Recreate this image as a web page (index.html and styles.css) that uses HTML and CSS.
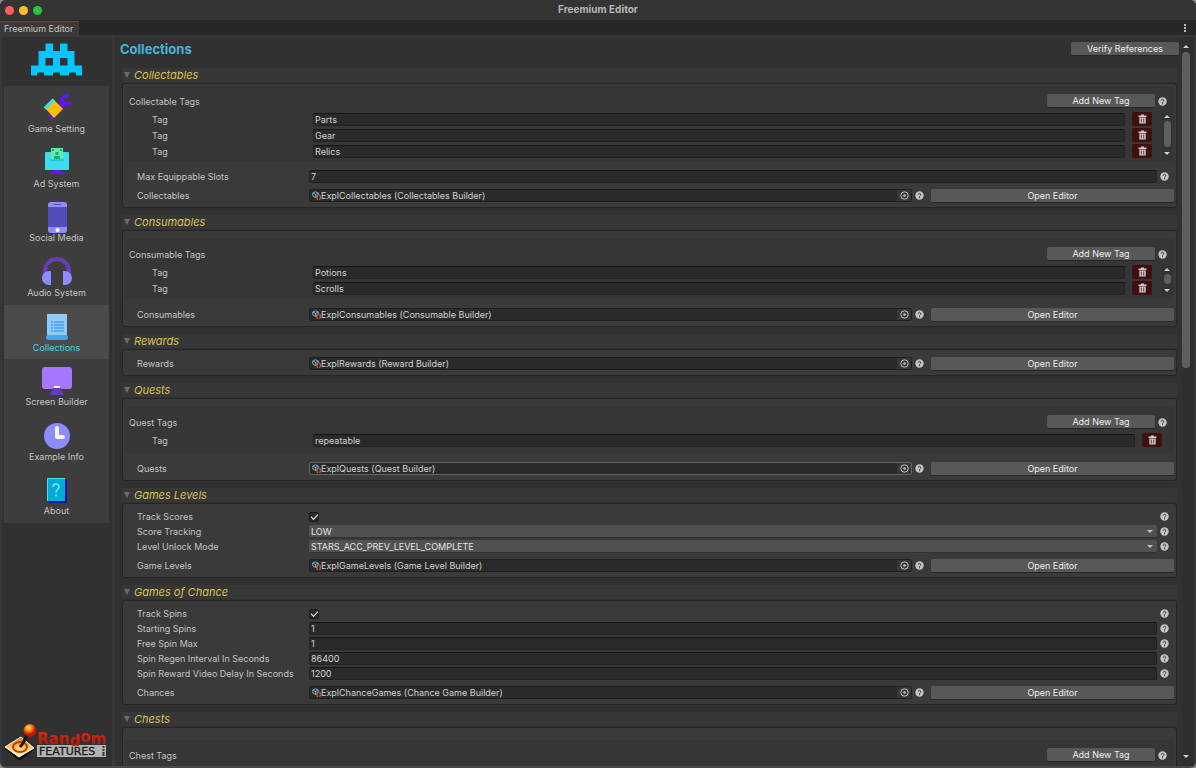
FILE: index.html
```html
<!DOCTYPE html>
<html lang="en">
<head>
    <meta charset="UTF-8">
    <meta name="viewport" content="width=device-width, initial-scale=1.0">
    <title>Freemium Editor</title>
    <link rel="stylesheet" href="styles.css">
</head>
<body>
    <!-- shared icons -->
    <svg class="icon-defs" width="0" height="0" aria-hidden="true">
        <symbol id="help" viewBox="0 0 9 9">
            <circle cx="4.5" cy="4.5" r="4.2" fill="#c4c4c4"/>
            <path d="M3.2 3.6a1.3 1.3 0 1 1 2 1.1q-.7.4-.7 1" fill="none" stroke="#333" stroke-width="1"/>
            <rect x="4" y="6.2" width="1" height="1" fill="#333"/>
        </symbol>
        <symbol id="trash" viewBox="0 0 9 10">
            <path d="M3 .5h3v1h2.500v1.500H.5V1.500H3z" fill="#ccc"/>
            <path d="M1.300 3.500h6.400V9.500H1.300z" fill="#ccc"/>
            <path d="M3.300 4.500v4M5.700 4.500v4" stroke="#4a1c1c" stroke-width=".8"/>
        </symbol>
        <symbol id="asset" viewBox="0 0 9 9">
            <path d="M3.500.8 6.200 2v2.500L3.500 6.500.8 5V2zM.8 2l2.700 1.400L6.200 2M3.500 3.400v3" fill="none" stroke="#6bc0de" stroke-width=".9"/>
            <path d="M6 4q-1 0-1 1v.9l-.6.5.6.5v.6q0 1 1 1M7.200 4q1 0 1 1v.9l.6.5-.6.5v.6q0 1-1 1" fill="none" stroke="#f0502a" stroke-width="1.200"/>
        </symbol>
        <symbol id="picker" viewBox="0 0 9 9">
            <circle cx="4.500" cy="4.500" r="3.700" fill="none" stroke="#c4c4c4"/>
            <circle cx="4.500" cy="4.500" r="1.300" fill="#c4c4c4"/>
        </symbol>
    </svg>

    <div class="window">
        <header class="titlebar">
            <div class="lights"><i class="red"></i><i class="yellow"></i><i class="green"></i></div>
            <h1>Freemium Editor</h1>
        </header>
        <div class="tabs">
            <div class="tab">Freemium Editor</div>
            <button class="kebab" aria-label="Menu"><i></i><i></i><i></i></button>
        </div>

        <div class="body">
            <aside class="sidebar">
                <svg class="logo" viewBox="0 0 51 32" fill="#00c8ff">
                    <path d="M14.500 0h7.500v7.500h7V0h7.500v7.500h7V22H51v10h-6v-3h-7v3h-9v-3h-7v3h-9v-3H6v3H0V22h7.500V7.500h7zM14.500 14.500V22H22v-7.500zM29 14.500V22h7.500v-7.500z" fill-rule="evenodd"/>
                </svg>
                <nav class="menu">
                    <a href="#game">
                        <svg viewBox="0 0 32 32">
                            <path d="M19 15l5-5" stroke="#6316f5" stroke-width="6"/>
                            <path d="M28 4.500a4.500 4.500 0 1 0 1.500 5" fill="none" stroke="#6316f5" stroke-width="3.500"/>
                            <path d="M7 23l4-2 3 4-3 3z" fill="#6316f5"/>
                            <path d="M4 16l8-9 10 10-9 9z" fill="#fdbf00"/>
                            <path d="M2.700 15.300l9-9L14 8.700l-9 9z" fill="#3ddcf0"/>
                        </svg>
                        Game Setting
                    </a>
                    <a href="#ads">
                        <svg viewBox="0 0 32 32">
                            <rect x="4" y="5" width="24" height="18" rx="1" fill="#3ddcf0"/>
                            <rect x="10" y="1" width="12" height="12" fill="#64e8b0"/>
                            <path d="M11 2h2v2h-2zM19 2h2v2h-2zM14.500 5h3v3h-3zM13 9h6v3h-6z" fill="#12b27a"/>
                            <path d="M9 13h14" stroke="#1ba9bb"/>
                            <path d="M13 23h6v2h5v2H9v-2h4z" fill="#6316f5"/>
                        </svg>
                        Ad System
                    </a>
                    <a href="#social">
                        <svg viewBox="0 0 32 32">
                            <rect x="7" y="1" width="19" height="31" rx="3" fill="#8c8cff"/>
                            <path d="M7 6h19v20H7z" fill="#504fb9"/>
                            <path d="M13 3.500h7" stroke="#504fb9"/>
                            <circle cx="16.500" cy="29" r="2" fill="#fff"/>
                        </svg>
                        Social Media
                    </a>
                    <a href="#audio">
                        <svg viewBox="0 0 32 32">
                            <path d="M4 18v-3a12 12 0 0 1 24 0v3" fill="none" stroke="#6a3cb4" stroke-width="4"/>
                            <path d="M10 15v14H8a7 7 0 0 1 0-14zM22 15v14h2a7 7 0 0 0 0-14z" fill="#8c8cff"/>
                        </svg>
                        Audio System
                    </a>
                    <a href="#collections" class="active">
                        <svg viewBox="0 0 32 32">
                            <path d="M6 3h20v24H6z" fill="#90caf9"/>
                            <path d="M10 11h2M10 14h2M10 17h2M10 20h2M13 11h10M13 14h10M13 17h10M13 20h10" stroke="#1e88e5"/>
                            <rect x="5" y="24" width="22" height="5" rx="2" fill="#42a5f5"/>
                        </svg>
                        Collections
                    </a>
                    <a href="#screens">
                        <svg viewBox="0 0 32 32">
                            <rect x="1" y="2" width="30" height="22" rx="3" fill="#a576ff"/>
                            <path d="M12 23h8l3 7H9z" fill="#6a3cb4"/>
                            <path d="M13 21h6v2h-6z" fill="#eef"/>
                        </svg>
                        Screen Builder
                    </a>
                    <a href="#example">
                        <svg viewBox="0 0 32 32">
                            <circle cx="16" cy="16" r="13" fill="#8c8cff"/>
                            <path d="M16 8v9h6" fill="none" stroke="#f4f4ff" stroke-width="4" stroke-linecap="round" stroke-linejoin="round"/>
                        </svg>
                        Example Info
                    </a>
                    <a href="#about">
                        <svg viewBox="0 0 32 32">
                            <path d="M8 6h18v23H8z" fill="#1a0dab"/>
                            <path d="M6 4h18v23H6z" fill="#00acd6"/>
                            <path d="M6.500 27V4.500H24" fill="none" stroke="#4ddcf0"/>
                            <path d="M12 13q0-3 3-3t3 3q0 1.500-1.500 2.500T15 18.500M15 20.500v2" fill="none" stroke="#7aeaff" stroke-width="1.500"/>
                        </svg>
                        About
                    </a>
                </nav>
                <svg class="brand" viewBox="0 0 104 38">
                    <defs>
                        <radialGradient id="ball" cx=".4" cy=".3"><stop offset="0" stop-color="#ffe9a0"/><stop offset=".4" stop-color="#ff9a1e"/><stop offset="1" stop-color="#c01800"/></radialGradient>
                        <linearGradient id="base" x2="0" y2="1"><stop offset="0" stop-color="#e86c10"/><stop offset=".6" stop-color="#ffd76a"/><stop offset="1" stop-color="#fff3c8"/></linearGradient>
                        <linearGradient id="word" x2="0" y2="1"><stop offset="0" stop-color="#f02a10"/><stop offset="1" stop-color="#9c1408"/></linearGradient>
                    </defs>
                    <path d="M0 24l17-11 15 11-15 12h-3z" fill="#16100c"/>
                    <path d="M1 23l16-10 13 11-15 9z" fill="url(#base)" stroke="#fff" stroke-width="1"/>
                    <ellipse cx="16" cy="23" rx="7" ry="5" fill="none" stroke="#c23408" stroke-width="2"/>
                    <path d="M16 23q4-4 8-15" fill="none" stroke="#20120c" stroke-width="3"/>
                    <circle cx="26" cy="6.500" r="6.500" fill="url(#ball)"/>
                    <rect x="33" y="21" width="69" height="12" fill="#b4b4b4"/>
                    <text class="brand-name" x="33" y="20 20 20 22 18 20" fill="url(#word)">Random</text>
                    <text class="brand-sub" x="35" y="31">FEATURES</text>
                    <path d="M99.500 22v2m0 1v2m0 1v4" stroke="#333" stroke-width="2"/>
                </svg>
            </aside>

            <main class="content">
                <div class="scroll-area">
                    <div class="page-head">
                        <h2>Collections</h2>
                        <button class="btn">Verify References</button>
                    </div>

                    <details open>
                        <summary>Collectables</summary>
                        <div class="box">
                            <div class="tag-panel first">
                                <div class="tag-head"><span>Collectable Tags</span><button class="btn">Add New Tag</button><svg class="help"><use href="#help"/></svg></div>
                                <div class="tag-list">
                                    <div class="tag-rows">
                                        <div class="tag-row"><label for="c1">Tag</label><input type="text" id="c1" value="Parts"><button class="trash" aria-label="Delete"><svg><use href="#trash"/></svg></button></div>
                                        <div class="tag-row"><label for="c2">Tag</label><input type="text" id="c2" value="Gear"><button class="trash" aria-label="Delete"><svg><use href="#trash"/></svg></button></div>
                                        <div class="tag-row"><label for="c3">Tag</label><input type="text" id="c3" value="Relics"><button class="trash" aria-label="Delete"><svg><use href="#trash"/></svg></button></div>
                                    </div>
                                    <div class="scrollbar mini"><i class="up"></i><b></b><i class="down"></i></div>
                                </div>
                            </div>
                            <div class="fields">
                                <div class="field"><label for="slots">Max Equippable Slots</label><input type="text" id="slots" value="7"><svg class="help"><use href="#help"/></svg></div>
                            </div>
                            <div class="object">
                                <label for="collectables">Collectables</label>
                                <div class="slot"><svg><use href="#asset"/></svg><input type="text" id="collectables" value="ExplCollectables (Collectables Builder)"><button aria-label="Pick"><svg><use href="#picker"/></svg></button></div>
                                <svg class="help"><use href="#help"/></svg>
                                <button class="btn open">Open Editor</button>
                            </div>
                        </div>
                    </details>

                    <details open>
                        <summary>Consumables</summary>
                        <div class="box">
                            <div class="tag-panel">
                                <div class="tag-head"><span>Consumable Tags</span><button class="btn">Add New Tag</button><svg class="help"><use href="#help"/></svg></div>
                                <div class="tag-list">
                                    <div class="tag-rows">
                                        <div class="tag-row"><label for="s1">Tag</label><input type="text" id="s1" value="Potions"><button class="trash" aria-label="Delete"><svg><use href="#trash"/></svg></button></div>
                                        <div class="tag-row"><label for="s2">Tag</label><input type="text" id="s2" value="Scrolls"><button class="trash" aria-label="Delete"><svg><use href="#trash"/></svg></button></div>
                                    </div>
                                    <div class="scrollbar mini"><i class="up"></i><b></b><i class="down"></i></div>
                                </div>
                            </div>
                            <div class="object">
                                <label for="consumables">Consumables</label>
                                <div class="slot"><svg><use href="#asset"/></svg><input type="text" id="consumables" value="ExplConsumables (Consumable Builder)"><button aria-label="Pick"><svg><use href="#picker"/></svg></button></div>
                                <svg class="help"><use href="#help"/></svg>
                                <button class="btn open">Open Editor</button>
                            </div>
                        </div>
                    </details>

                    <details open>
                        <summary>Rewards</summary>
                        <div class="box">
                            <div class="object">
                                <label for="rewards">Rewards</label>
                                <div class="slot"><svg><use href="#asset"/></svg><input type="text" id="rewards" value="ExplRewards (Reward Builder)"><button aria-label="Pick"><svg><use href="#picker"/></svg></button></div>
                                <svg class="help"><use href="#help"/></svg>
                                <button class="btn open">Open Editor</button>
                            </div>
                        </div>
                    </details>

                    <details open>
                        <summary>Quests</summary>
                        <div class="box">
                            <div class="tag-panel">
                                <div class="tag-head"><span>Quest Tags</span><button class="btn">Add New Tag</button><svg class="help"><use href="#help"/></svg></div>
                                <div class="tag-list single">
                                    <div class="tag-rows">
                                        <div class="tag-row"><label for="q1">Tag</label><input type="text" id="q1" value="repeatable"><button class="trash" aria-label="Delete"><svg><use href="#trash"/></svg></button></div>
                                    </div>
                                </div>
                            </div>
                            <div class="object">
                                <label for="quests">Quests</label>
                                <div class="slot hovered"><svg><use href="#asset"/></svg><input type="text" id="quests" value="ExplQuests (Quest Builder)"><button aria-label="Pick"><svg><use href="#picker"/></svg></button></div>
                                <svg class="help"><use href="#help"/></svg>
                                <button class="btn open">Open Editor</button>
                            </div>
                        </div>
                    </details>

                    <details open>
                        <summary>Games Levels</summary>
                        <div class="box">
                            <div class="fields">
                                <div class="field"><label for="scores">Track Scores</label><input type="checkbox" id="scores" checked><svg class="help"><use href="#help"/></svg></div>
                                <div class="field"><label for="tracking">Score Tracking</label><div class="select"><select id="tracking"><option>LOW</option><option>HIGH</option></select></div><svg class="help"><use href="#help"/></svg></div>
                                <div class="field"><label for="unlock">Level Unlock Mode</label><div class="select"><select id="unlock"><option>STARS_ACC_PREV_LEVEL_COMPLETE</option></select></div><svg class="help"><use href="#help"/></svg></div>
                            </div>
                            <div class="object">
                                <label for="levels">Game Levels</label>
                                <div class="slot"><svg><use href="#asset"/></svg><input type="text" id="levels" value="ExplGameLevels (Game Level Builder)"><button aria-label="Pick"><svg><use href="#picker"/></svg></button></div>
                                <svg class="help"><use href="#help"/></svg>
                                <button class="btn open">Open Editor</button>
                            </div>
                        </div>
                    </details>

                    <details open>
                        <summary>Games of Chance</summary>
                        <div class="box">
                            <div class="fields">
                                <div class="field"><label for="spins">Track Spins</label><input type="checkbox" id="spins" checked><svg class="help"><use href="#help"/></svg></div>
                                <div class="field"><label for="starting">Starting Spins</label><input type="text" id="starting" value="1"><svg class="help"><use href="#help"/></svg></div>
                                <div class="field"><label for="free">Free Spin Max</label><input type="text" id="free" value="1"><svg class="help"><use href="#help"/></svg></div>
                                <div class="field"><label for="regen">Spin Regen Interval In Seconds</label><input type="text" id="regen" value="86400"><svg class="help"><use href="#help"/></svg></div>
                                <div class="field"><label for="delay">Spin Reward Video Delay In Seconds</label><input type="text" id="delay" value="1200"><svg class="help"><use href="#help"/></svg></div>
                            </div>
                            <div class="object">
                                <label for="chances">Chances</label>
                                <div class="slot"><svg><use href="#asset"/></svg><input type="text" id="chances" value="ExplChanceGames (Chance Game Builder)"><button aria-label="Pick"><svg><use href="#picker"/></svg></button></div>
                                <svg class="help"><use href="#help"/></svg>
                                <button class="btn open">Open Editor</button>
                            </div>
                        </div>
                    </details>

                    <details open>
                        <summary>Chests</summary>
                        <div class="box">
                            <div class="tag-panel last">
                                <div class="tag-head"><span>Chest Tags</span><button class="btn">Add New Tag</button><svg class="help"><use href="#help"/></svg></div>
                            </div>
                        </div>
                    </details>
                </div>
                <div class="scrollbar"><i class="up"></i><b></b><i class="down"></i></div>
            </main>
        </div>
    </div>
</body>
</html>
```
FILE: styles.css
```css
* {
    box-sizing: border-box;
}
body {
    margin: 0;
    background-color: #8a8a8a;
    font-family: Inter, sans-serif;
    font-size: 9px;
    line-height: 13px;
    color: #c4c4c4;
}
button, input, select {
    font: inherit;
    color: #d2d2d2;
    margin: 0;
    padding: 0;
    border: none;
}
svg {
    flex: none;
}
.icon-defs {
    position: absolute;
}
.window {
    display: flex;
    flex-direction: column;
    height: 100vh;
    background-color: #383838;
    border-bottom: 2px solid #484848;
    border-radius: 6px;
    overflow: hidden;
}

/* title bar and tabs */
.titlebar {
    display: grid;
    grid-template-columns: 1fr auto 1fr;
    align-items: center;
    height: 20px;
    flex: none;
    background-color: #343434;
}
.titlebar h1 {
    margin: 0 0 2px;
    font-size: 10px;
    font-weight: 700;
    color: #b8b8b8;
}
.lights {
    display: flex;
    gap: 5px;
    padding-left: 5px;
}
.lights i {
    width: 9px;
    height: 9px;
    border-radius: 50%;
}
.red { background-color: #ff5f57; }
.yellow { background-color: #febc2e; }
.green { background-color: #28c840; }
.tabs {
    display: flex;
    justify-content: space-between;
    height: 15px;
    flex: none;
    background-color: #272727;
}
.tab {
    margin-top: 1px;
    padding: 0 6px 0 4px;
    border-top: 1px solid #2c5d87;
    background-color: #3a3a3a;
}
.kebab {
    display: flex;
    flex-direction: column;
    align-items: center;
    justify-content: center;
    gap: 1px;
    width: 22px;
    background: none;
}
.kebab i {
    width: 2px;
    height: 2px;
    background-color: #bbb;
}

/* sidebar */
.body {
    display: flex;
    flex: 1;
    gap: 3px;
    min-height: 0;
    padding: 2px 2px 0;
}
.sidebar {
    display: flex;
    flex-direction: column;
    width: 110px;
    flex: none;
    padding: 6px 3px 4px 2px;
    background-color: #313131;
}
.logo {
    width: 51px;
    height: 33px;
    align-self: center;
    margin-bottom: 10px;
}
.menu {
    display: grid;
    grid-auto-rows: 1fr;
    height: 437px;
    background-color: #3d3d3d;
}
.menu a {
    display: flex;
    flex-direction: column;
    align-items: center;
    padding-top: 6px;
    line-height: 10px;
    color: #c4c4c4;
    text-decoration: none;
}
.menu svg {
    width: 32px;
    height: 32px;
}
.menu .active {
    background-color: #4b4b4b;
    color: #4cd2e6;
}
.brand {
    width: 104px;
    height: 38px;
    margin-top: auto;
}
.brand-name {
    font-family: "DejaVu Sans", sans-serif;
    font-size: 15px;
    font-weight: bold;
}
.brand-sub {
    font-family: "DejaVu Sans", sans-serif;
    font-size: 11px;
    fill: #1a1a1a;
    stroke: #1a1a1a;
    stroke-width: 0.3;
}

/* main area */
.content {
    display: flex;
    flex: 1;
    gap: 3px;
    min-width: 0;
    padding-left: 5px;
    background-color: #313131;
}
.scroll-area {
    flex: 1;
    min-width: 0;
    overflow: hidden;
}
.page-head {
    display: flex;
    justify-content: space-between;
    align-items: center;
    height: 24px;
    margin-bottom: 7px;
}
.page-head h2 {
    margin: 0;
    font-size: 13px;
    font-weight: 700;
    color: #44b4d8;
}
.btn {
    width: 108px;
    height: 14px;
    flex: none;
    padding-top: 1px;
    background-color: #585858;
    border-bottom: 1px solid #262626;
    border-radius: 2px;
    line-height: 12px;
    color: #eee;
}
.btn:hover {
    background-color: #676767;
}

/* foldout sections */
details {
    margin: 0 2px 7px;
}
summary {
    display: flex;
    align-items: center;
    gap: 4px;
    height: 14px;
    margin-bottom: 1px;
    padding-left: 2px;
    background-color: #373737;
    font-size: 11px;
    font-style: italic;
    color: #dcc052;
}
summary::before {
    content: "";
    border: 3px solid transparent;
    border-top: 6px solid #6c6c6c;
    border-bottom: none;
}
.box {
    padding: 2px 2px 5px;
    background-color: #3a3a3a;
    border: 1px solid #252525;
    border-radius: 3px;
}
.help {
    width: 9px;
    height: 9px;
}

/* tags */
.tag-panel {
    margin-top: 6px;
    padding: 8px 2px 3px 4px;
    background-color: #363636;
}
.tag-panel.first {
    margin-top: 0;
    padding-bottom: 2px;
}
.tag-panel.last {
    margin-top: 10px;
}
.tag-head {
    display: flex;
    align-items: center;
    gap: 3px;
    height: 14px;
    margin-bottom: 3px;
    padding-right: 5px;
}
.tag-head span {
    flex: 1;
}
.tag-list {
    display: flex;
    gap: 10px;
}
.tag-list.single {
    padding: 0 10px 2px 0;
}
.tag-rows {
    flex: 1;
}
.tag-row {
    display: flex;
    align-items: center;
    height: 16px;
}
.tag-row label {
    width: 184px;
    padding-left: 23px;
}
.tag-row .trash {
    display: flex;
    align-items: center;
    justify-content: center;
    width: 20px;
    height: 14px;
    margin-left: 7px;
    background-color: #3f1010;
    border-radius: 2px;
}
.trash svg {
    width: 9px;
    height: 10px;
}
input[type="text"] {
    flex: 1;
    min-width: 0;
    height: 13px;
    padding: 0 1px;
    background-color: #2a2a2a;
    border: 1px solid #222;
    border-top-color: #151515;
    border-radius: 2px;
    line-height: 11px;
}

/* plain fields and object fields */
.fields {
    margin-top: 3px;
}
.tag-panel + .fields {
    margin-top: 8px;
}
.field {
    display: flex;
    align-items: center;
    height: 15px;
    padding-right: 5px;
}
.field label, .object label {
    width: 184px;
    flex: none;
    padding-left: 12px;
}
.field .help {
    margin-left: 3px;
}
input[type="checkbox"] {
    appearance: none;
    width: 10px;
    height: 10px;
    margin-right: auto;
    background-color: #2a2a2a;
    border: 1px solid #1c1c1c;
    border-radius: 2px;
}
input[type="checkbox"]:checked::before {
    content: "";
    display: block;
    width: 6px;
    height: 3px;
    margin: 1px;
    border-left: 1px solid #eee;
    border-bottom: 1px solid #eee;
    transform: rotate(-45deg);
}
.select {
    display: grid;
    flex: 1;
    align-items: center;
}
.select select, .select::after {
    grid-area: 1 / 1;
}
.select select {
    appearance: none;
    height: 13px;
    padding: 1px 0 0 2px;
    background-color: #515151;
    border-bottom: 1px solid #303030;
    border-radius: 2px;
    line-height: 12px;
    color: #e4e4e4;
}
.select::after {
    content: "";
    justify-self: end;
    margin-right: 4px;
    border: 3px solid transparent;
    border-top: 3px solid #c4c4c4;
    border-bottom: none;
    pointer-events: none;
}
.object {
    display: flex;
    align-items: center;
    height: 13px;
    margin-top: 5px;
}
.tag-panel + .object {
    margin-top: 9px;
}
.slot {
    display: flex;
    align-items: center;
    flex: 1;
    height: 13px;
    padding-left: 2px;
    background-color: #2a2a2a;
    border: 1px solid #202020;
    border-radius: 2px;
}
.slot.hovered {
    border-color: #656565;
}
.slot svg {
    width: 9px;
    height: 9px;
}
.slot input[type="text"] {
    height: 11px;
    padding: 0;
    background: none;
    border: none;
}
.slot button {
    display: flex;
    align-items: center;
    justify-content: center;
    width: 14px;
    height: 11px;
    background-color: #373737;
}
.object .help {
    margin: 0 7px 0 3px;
}
.btn.open {
    width: 243px;
}

/* scrollbars */
.scrollbar {
    display: flex;
    flex-direction: column;
    align-items: center;
    width: 12px;
    flex: none;
    padding: 8px 4px 8px 0;
    background-color: #2e2e2e;
}
.scrollbar b {
    width: 8px;
    height: 316px;
    margin: 4px 0 auto;
    background-color: #5f5f5f;
    border-radius: 4px;
}
.scrollbar i {
    border: 3px solid transparent;
}
.scrollbar .up {
    border-bottom-color: #d0d0d0;
    border-top: none;
}
.scrollbar .down {
    border-top-color: #d0d0d0;
    border-bottom: none;
}
.scrollbar.mini {
    width: 10px;
    padding: 4px 0;
    background-color: #333;
}
.scrollbar.mini b {
    flex: 1;
    width: 7px;
    margin: 3px 0 5px;
}
```
